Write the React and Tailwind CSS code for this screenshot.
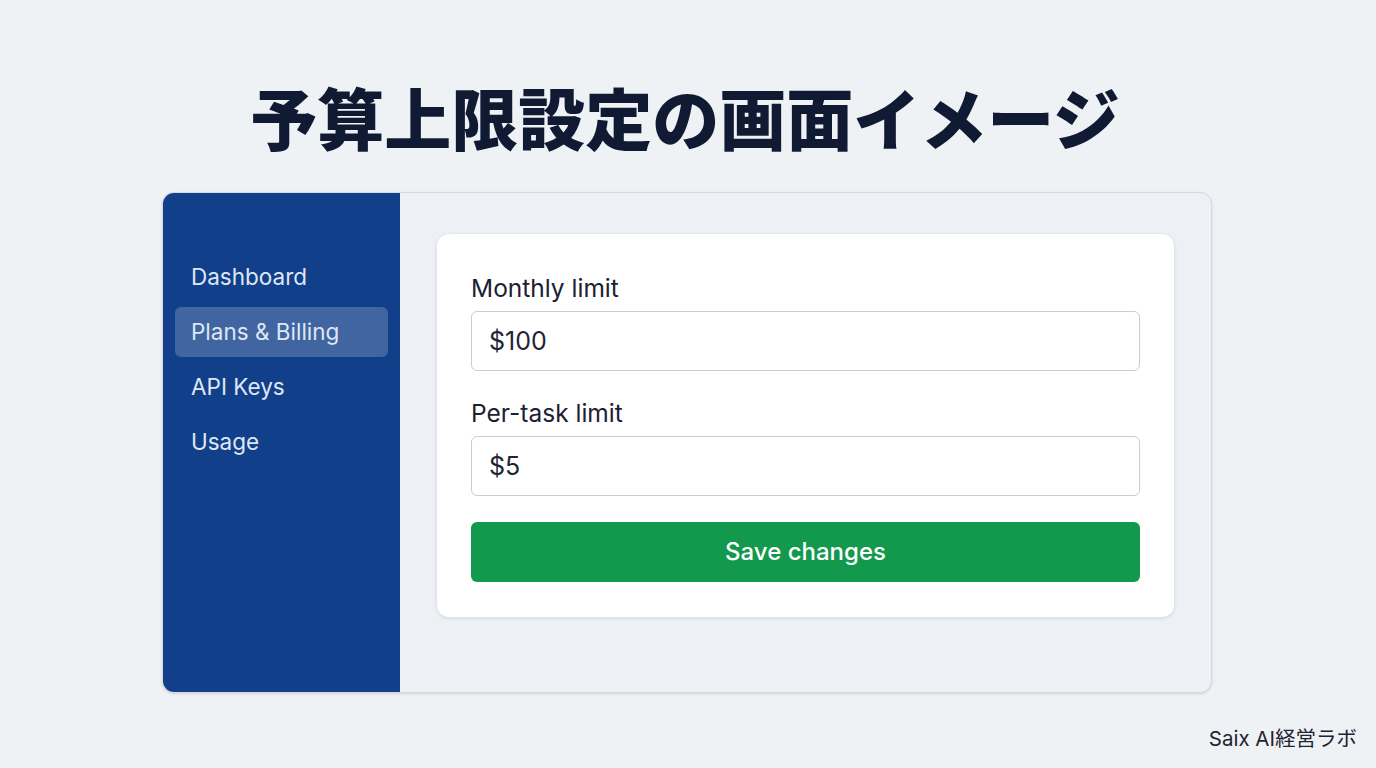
import React, { useState } from "react";

const navItems = ["Dashboard", "Plans & Billing", "API Keys", "Usage"];

const App = () => {
  const [active, setActive] = useState("Plans & Billing");
  const [monthly, setMonthly] = useState("$100");
  const [perTask, setPerTask] = useState("$5");

  return (
    <div
      className="relative flex h-[768px] w-full flex-col items-center overflow-hidden bg-[#eff2f5]"
      style={{ fontFamily: "Inter, 'Noto Sans CJK JP', sans-serif" }}
    >
      {/* title */}
      <h1
        className="ml-[-6px] mt-[82px] h-[68px] text-[67px] font-black leading-[68px] text-[#101a33]"
        style={{ fontFamily: "'Noto Sans CJK JP', sans-serif" }}
      >
        予算上限設定の画面イメージ
      </h1>

      {/* mock window */}
      <div className="ml-[-2px] mt-[42px] flex h-[501px] w-[1050px] overflow-hidden rounded-xl border border-[#d6dae0] bg-[#edf0f4] shadow-sm">
        {/* sidebar */}
        <div className="flex w-[237px] shrink-0 flex-col gap-[5px] bg-[#123f89] px-3 pt-[59px]">
          {navItems.map((item) => (
            <button
              key={item}
              onClick={() => setActive(item)}
              className={
                "flex h-[50px] items-center rounded-md px-[16px] text-left text-[22.5px] text-[#dfe7f5] " +
                (active === item ? "bg-white/20" : "")
              }
            >
              {item}
            </button>
          ))}
        </div>

        {/* content */}
        <div className="flex-1 px-[37px] pt-[41px]">
          <div className="rounded-xl bg-white px-[34px] pb-[35px] pt-[39px] shadow-[0_1px_4px_rgba(15,23,42,0.12)]">
            <label className="block text-[24.5px] leading-[30px] text-[#1b2130]">
              Monthly limit
            </label>
            <input
              value={monthly}
              onChange={(e) => setMonthly(e.target.value)}
              className="mt-[8px] h-[60px] w-full rounded-md border border-[#c9cdd3] px-[17px] text-[25px] text-[#1f2533] outline-none"
            />

            <label className="mt-[27px] block text-[24.5px] leading-[30px] text-[#1b2130]">
              Per-task limit
            </label>
            <input
              value={perTask}
              onChange={(e) => setPerTask(e.target.value)}
              className="mt-[8px] h-[60px] w-full rounded-md border border-[#c9cdd3] px-[17px] text-[25px] text-[#1f2533] outline-none"
            />

            <button className="mt-[26px] flex h-[60px] w-full items-center justify-center rounded-md bg-[#12994d] text-[24px] font-medium text-white">
              Save changes
            </button>
          </div>
        </div>
      </div>

      {/* footer */}
      <div className="absolute bottom-[13px] right-[19px] text-[20.5px] text-[#1f2430]">
        Saix AI経営ラボ
      </div>
    </div>
  );
};

export default App;
